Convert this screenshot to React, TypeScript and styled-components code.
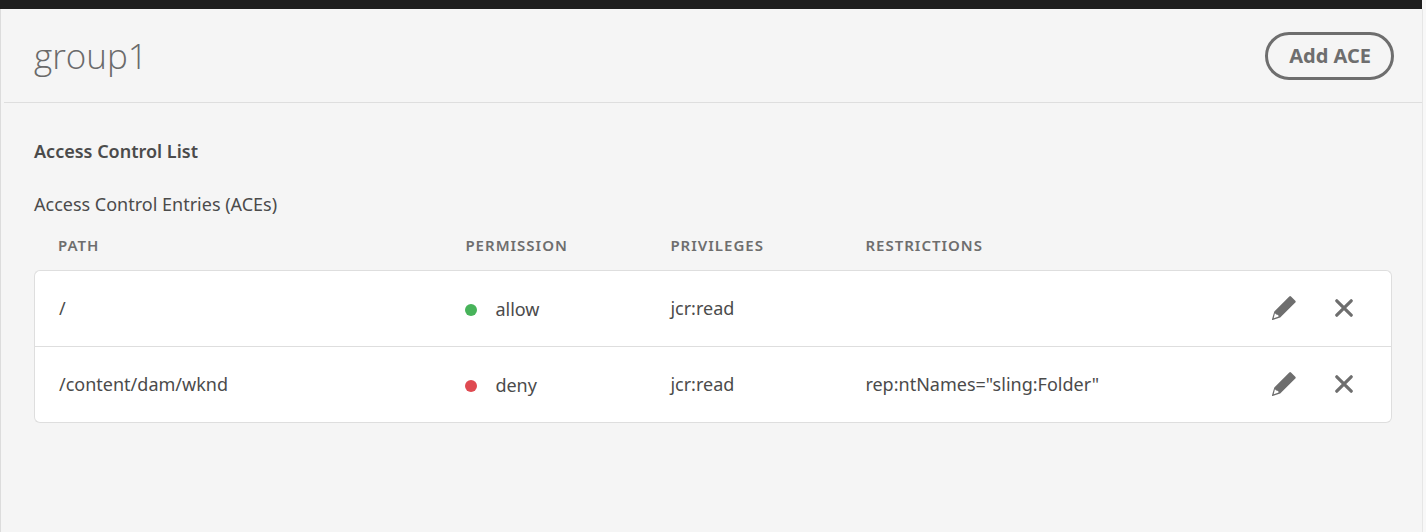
import React from "react";
import styled, { createGlobalStyle } from "styled-components";

const GlobalStyle = createGlobalStyle`
  *, *::before, *::after { box-sizing: border-box; }
  body {
    margin: 0;
    background: #f8f8f8;
    color: #4b4b4b;
    font-family: "Noto Sans", "Open Sans", sans-serif;
    font-size: 18px;
    line-height: 24px;
  }
`;

const Shell = styled.div`
  display: flex;
  flex-direction: column;
  min-height: 100vh;
  margin-right: 4px;
`;

const TopBar = styled.div`
  height: 9px;
  background: #1e1e1e;
`;

const Panel = styled.main`
  flex: 1;
  background: #f5f5f5;
  border-left: 1px solid #dcdcdc;
  box-shadow: 1px 0 0 #e6e6e6;
`;

const Header = styled.header`
  display: flex;
  align-items: center;
  justify-content: space-between;
  height: 94px;
  margin-left: 3px;
  padding: 0 28px 0 30px;
  border-bottom: 1px solid #dedede;
`;

const Title = styled.h1`
  margin: 0;
  font-family: "Open Sans", "Noto Sans", sans-serif;
  font-size: 35px;
  font-weight: 300;
  line-height: 48px;
  color: #6a6a6a;
`;

const AddButton = styled.button`
  height: 48px;
  padding: 1px 20px 0 21px;
  border: 3px solid #6e6e6e;
  border-radius: 24px;
  background: transparent;
  color: #6e6e6e;
  font: 700 20px/24px "Noto Sans", "Open Sans", sans-serif;
  cursor: pointer;
`;

const Content = styled.section`
  padding: 36px 30px 36px 33px;
`;

const SectionTitle = styled.h2`
  margin: 0 0 29px;
  font-size: 18px;
  font-weight: 600;
  line-height: 24px;
`;

const AceTable = styled.table`
  width: 100%;
  table-layout: fixed;
  border-collapse: separate;
  border-spacing: 0;
`;

const Caption = styled.caption`
  text-align: left;
`;

const Column = styled.col<{ $width?: string }>`
  width: ${(p) => p.$width ?? "auto"};
`;

const HeadCell = styled.th`
  height: 54px;
  padding: 4px 24px 0;
  text-align: left;
  font-size: 15px;
  font-weight: 600;
  line-height: 20px;
  letter-spacing: 1px;
  text-transform: uppercase;
  color: #6e6e6e;
`;

const Cell = styled.td`
  height: 76px;
  padding: 0 24px 2px;
  background: #fff;
  border-top: 1px solid #dedede;
  &:first-child { border-left: 1px solid #dedede; }
  &:last-child { border-right: 1px solid #dedede; }
`;

const Row = styled.tr`
  &:first-child ${Cell}:first-child { border-top-left-radius: 6px; }
  &:first-child ${Cell}:last-child { border-top-right-radius: 6px; }
  &:last-child ${Cell} { height: 77px; border-bottom: 1px solid #dedede; }
  &:last-child ${Cell}:first-child { border-bottom-left-radius: 6px; }
  &:last-child ${Cell}:last-child { border-bottom-right-radius: 6px; }
`;

const Status = styled.span<{ $color: string }>`
  display: flex;
  align-items: center;
  gap: 18px;
  padding-top: 2px;
  &::before {
    content: "";
    width: 12px;
    height: 12px;
    margin-top: 2px;
    border-radius: 50%;
    background: ${(p) => p.$color};
  }
`;

const Actions = styled.div`
  display: flex;
  justify-content: flex-end;
  gap: 24px;
  margin-right: 5px;
  padding-top: 1px;
`;

const IconButton = styled.button`
  display: flex;
  align-items: center;
  justify-content: center;
  width: 36px;
  height: 36px;
  padding: 0;
  border: 0;
  background: transparent;
  color: #6e6e6e;
  cursor: pointer;
`;

const PencilIcon = () => (
  <svg width="24" height="24" viewBox="0 0 24 24" aria-hidden="true">
    <path
      fill="currentColor"
      fillRule="evenodd"
      d="M17.300.5a1.200 1.200 0 0 1 1.700 0l4.300 4.300a1.200 1.200 0 0 1 0 1.700L8.200 21.600.7 23.900a.6.6 0 0 1-.7-.7L2.300 15.500ZM2.900 17.300 1.700 22.200 6.600 20.600 6.200 19 4.300 18.600Z"
    />
  </svg>
);

const CrossIcon = () => (
  <svg width="18" height="18" viewBox="0 0 18 18" aria-hidden="true">
    <path d="M1.800 1.800 16.200 16.200M16.200 1.800 1.800 16.200" stroke="currentColor" strokeWidth="3.200" strokeLinecap="round" />
  </svg>
);

const entries = [
  { path: "/", permission: "allow", privileges: "jcr:read", restrictions: "" },
  { path: "/content/dam/wknd", permission: "deny", privileges: "jcr:read", restrictions: 'rep:ntNames="sling:Folder"' },
];

const statusColors: Record<string, string> = { allow: "#47b35a", deny: "#df4a51" };

export default function App() {
  return (
    <>
      <GlobalStyle />
      <Shell>
        <TopBar />
        <Panel>
          <Header>
            <Title>group1</Title>
            <AddButton type="button">Add ACE</AddButton>
          </Header>
          <Content>
            <SectionTitle>Access Control List</SectionTitle>
            <AceTable>
              <Caption>Access Control Entries (ACEs)</Caption>
              <colgroup>
                <Column $width="30%" />
                <Column $width="205px" />
                <Column $width="195px" />
                <Column />
                <Column $width="180px" />
              </colgroup>
              <thead>
                <tr>
                  <HeadCell scope="col">Path</HeadCell>
                  <HeadCell scope="col">Permission</HeadCell>
                  <HeadCell scope="col">Privileges</HeadCell>
                  <HeadCell scope="col">Restrictions</HeadCell>
                  <HeadCell as="td" />
                </tr>
              </thead>
              <tbody>
                {entries.map((e) => (
                  <Row key={e.path}>
                    <Cell>{e.path}</Cell>
                    <Cell>
                      <Status $color={statusColors[e.permission]}>{e.permission}</Status>
                    </Cell>
                    <Cell>{e.privileges}</Cell>
                    <Cell>{e.restrictions}</Cell>
                    <Cell>
                      <Actions>
                        <IconButton type="button" aria-label={`Edit ${e.path}`}>
                          <PencilIcon />
                        </IconButton>
                        <IconButton type="button" aria-label={`Delete ${e.path}`}>
                          <CrossIcon />
                        </IconButton>
                      </Actions>
                    </Cell>
                  </Row>
                ))}
              </tbody>
            </AceTable>
          </Content>
        </Panel>
      </Shell>
    </>
  );
}
